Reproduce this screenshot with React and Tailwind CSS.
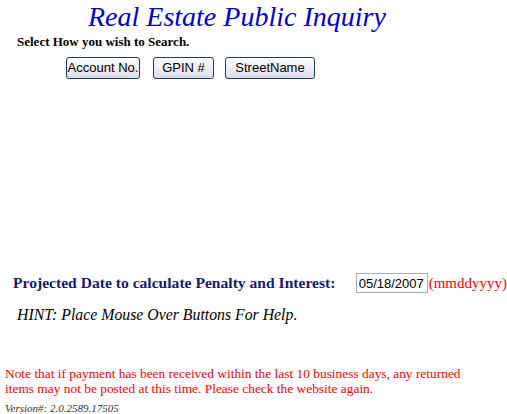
export default function App() {
  return (
    <div className="w-[507px] h-[414px] bg-white overflow-hidden font-['Liberation_Serif',serif] text-black">
      <h1 className="pl-[88px] pt-[1px] h-[34px] font-['Liberation_Serif',serif] font-normal text-[28px] leading-[32px] italic text-[#0000cc]">Real Estate Public Inquiry</h1>
      <div className="pl-[17px] text-[13px] leading-[16px] font-bold h-[19px]">Select How you wish to Search.</div>
      <div className="flex gap-[14px] pl-[66px] pt-[4px] font-['Liberation_Sans',sans-serif] text-[13px]">
        <button className="w-[74px] h-[22px] border border-[#1c3a6e] rounded-[3px] bg-gradient-to-b from-white to-[#dcdce8]">Account No.</button>
        <button className="w-[61px] h-[22px] border border-[#1c3a6e] rounded-[3px] bg-gradient-to-b from-white to-[#dcdce8] -ml-px">GPIN #</button>
        <button className="w-[90px] h-[22px] border border-[#1c3a6e] rounded-[3px] bg-gradient-to-b from-white to-[#dcdce8] -ml-[3px]">StreetName</button>
      </div>
      <div className="flex items-center pl-[13px] mt-[194px] h-[20px]">
        <span className="text-[15.6px] font-bold text-[#1a1a6e] w-[344px]">Projected Date to calculate Penalty and Interest:</span>
        <input readOnly value="05/18/2007" className="w-[72px] h-[20px] border border-[#a5acb2] px-[2px] font-['Liberation_Sans',sans-serif] text-[13px]" />
        <span className="text-[15px] text-[#ff0000] ml-[1px]">(mmddyyyy)</span>
      </div>
      <div className="pl-[17px] mt-[13px] text-[15.8px] italic leading-[18px]">HINT: Place Mouse Over Buttons For Help.</div>
      <div className="pl-[5px] mt-[42px] text-[13.4px] leading-[15px] text-[#ff0000] w-[470px]">
        Note that if payment has been received within the last 10 business days, any returned items may not be posted at this time. Please check the website again.
      </div>
      <div className="pl-[5px] mt-[6px] text-[11px] italic leading-[13px] text-[#333]">Version#: 2.0.2589.17505</div>
    </div>
  );
}
